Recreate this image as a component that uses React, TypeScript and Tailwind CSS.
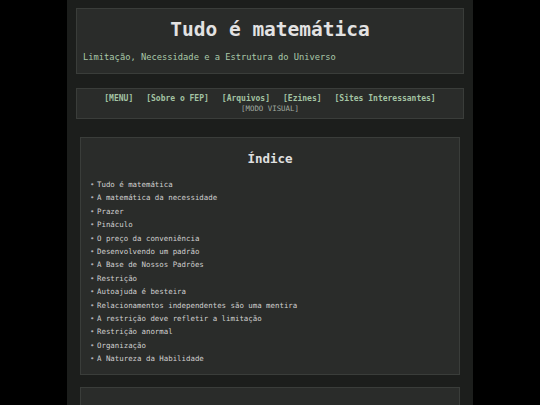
const capitulos = [
  'Tudo é matemática',
  'A matemática da necessidade',
  'Prazer',
  'Pináculo',
  'O preço da conveniência',
  'Desenvolvendo um padrão',
  'A Base de Nossos Padrões',
  'Restrição',
  'Autoajuda é besteira',
  'Relacionamentos independentes são uma mentira',
  'A restrição deve refletir a limitação',
  'Restrição anormal',
  'Organização',
  'A Natureza da Habilidade',
]

const links = ['[MENU]', '[Sobre o FEP]', '[Arquivos]', '[Ezines]', '[Sites Interessantes]']

export default function App() {
  return (
    <div className="min-h-[405px] bg-black font-['DejaVu_Sans_Mono',monospace]">
      <div className="mx-auto w-[406px] min-h-[405px] bg-[#1c1e1c] px-[9px] pt-[8px]">
        {/* Header */}
        <div className="h-[66px] border border-[#3a3d3a] bg-[#2a2c2a] px-[6px] pt-[9px]">
          <h1 className="text-center text-[19.5px] leading-[24px] font-bold text-[#e2e2e2]">
            Tudo é matemática
          </h1>
          <p className="mt-[9px] text-[8.75px] leading-[12px] text-[#a9c9a9]">
            Limitação, Necessidade e a Estrutura do Universo
          </p>
        </div>

        {/* Nav */}
        <div className="mt-[14px] h-[31px] border border-[#3a3d3a] bg-[#2a2c2a] pt-[4px] text-center">
          <div className="flex justify-center gap-[13px] text-[8px] leading-[11px] font-bold text-[#a3c3a3]">
            {links.map((l) => (
              <span key={l}>{l}</span>
            ))}
          </div>
          <div className="text-[7.4px] leading-[10px] text-[#a0aaa0]">[MODO VISUAL]</div>
        </div>

        {/* Content */}
        <div className="px-[4px] pt-[18px]">
          <div className="h-[238px] border border-[#3a3d3a] bg-[#2a2c2a] px-[9px] pt-[13px]">
            <h2 className="text-center text-[12.5px] leading-[16px] font-bold text-[#e0e0e0]">Índice</h2>
            <ul className="mt-[11px] text-[7.4px] leading-[13.4px] text-[#cfcfcf]">
              {capitulos.map((c) => (
                <li key={c} className="flex">
                  <span className="w-[7px] text-[#b0b0b0]">•</span>
                  <span>{c}</span>
                </li>
              ))}
            </ul>
          </div>
          <div className="mt-[12px] h-[40px] border border-[#3a3d3a] bg-[#2a2c2a]" />
        </div>
      </div>
    </div>
  )
}
